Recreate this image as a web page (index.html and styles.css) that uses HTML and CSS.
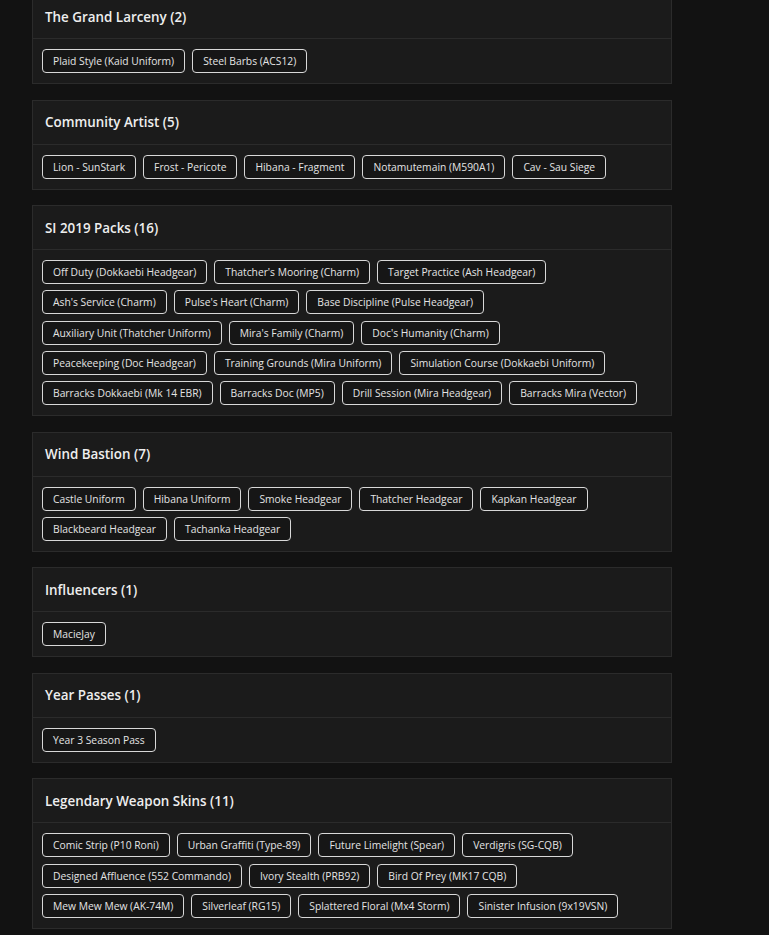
FILE: index.html
```html
<!DOCTYPE html>
<html lang="en">
<head>
<meta charset="utf-8">
<title>Packs</title>
<link rel="stylesheet" href="styles.css">
</head>
<body>
<div class="list">
  <section class="card">
    <h2 class="card-title">The Grand Larceny (2)</h2>
    <div class="tags">
      <span class="tag">Plaid Style (Kaid Uniform)</span>
      <span class="tag">Steel Barbs (ACS12)</span>
    </div>
  </section>
  <section class="card">
    <h2 class="card-title">Community Artist (5)</h2>
    <div class="tags">
      <span class="tag">Lion - SunStark</span>
      <span class="tag">Frost - Pericote</span>
      <span class="tag">Hibana - Fragment</span>
      <span class="tag">Notamutemain (M590A1)</span>
      <span class="tag">Cav - Sau Siege</span>
    </div>
  </section>
  <section class="card">
    <h2 class="card-title">SI 2019 Packs (16)</h2>
    <div class="tags">
      <span class="tag">Off Duty (Dokkaebi Headgear)</span>
      <span class="tag">Thatcher's Mooring (Charm)</span>
      <span class="tag">Target Practice (Ash Headgear)</span>
      <span class="tag">Ash's Service (Charm)</span>
      <span class="tag">Pulse's Heart (Charm)</span>
      <span class="tag">Base Discipline (Pulse Headgear)</span>
      <span class="tag">Auxiliary Unit (Thatcher Uniform)</span>
      <span class="tag">Mira's Family (Charm)</span>
      <span class="tag">Doc's Humanity (Charm)</span>
      <span class="tag">Peacekeeping (Doc Headgear)</span>
      <span class="tag">Training Grounds (Mira Uniform)</span>
      <span class="tag">Simulation Course (Dokkaebi Uniform)</span>
      <span class="tag">Barracks Dokkaebi (Mk 14 EBR)</span>
      <span class="tag">Barracks Doc (MP5)</span>
      <span class="tag">Drill Session (Mira Headgear)</span>
      <span class="tag">Barracks Mira (Vector)</span>
    </div>
  </section>
  <section class="card">
    <h2 class="card-title">Wind Bastion (7)</h2>
    <div class="tags">
      <span class="tag">Castle Uniform</span>
      <span class="tag">Hibana Uniform</span>
      <span class="tag">Smoke Headgear</span>
      <span class="tag">Thatcher Headgear</span>
      <span class="tag">Kapkan Headgear</span>
      <span class="tag">Blackbeard Headgear</span>
      <span class="tag">Tachanka Headgear</span>
    </div>
  </section>
  <section class="card">
    <h2 class="card-title">Influencers (1)</h2>
    <div class="tags">
      <span class="tag">MacieJay</span>
    </div>
  </section>
  <section class="card">
    <h2 class="card-title">Year Passes (1)</h2>
    <div class="tags">
      <span class="tag">Year 3 Season Pass</span>
    </div>
  </section>
  <section class="card">
    <h2 class="card-title">Legendary Weapon Skins (11)</h2>
    <div class="tags">
      <span class="tag">Comic Strip (P10 Roni)</span>
      <span class="tag">Urban Graffiti (Type-89)</span>
      <span class="tag">Future Limelight (Spear)</span>
      <span class="tag">Verdigris (SG-CQB)</span>
      <span class="tag">Designed Affluence (552 Commando)</span>
      <span class="tag">Ivory Stealth (PRB92)</span>
      <span class="tag">Bird Of Prey (MK17 CQB)</span>
      <span class="tag">Mew Mew Mew (AK-74M)</span>
      <span class="tag">Silverleaf (RG15)</span>
      <span class="tag">Splattered Floral (Mx4 Storm)</span>
      <span class="tag">Sinister Infusion (9x19VSN)</span>
    </div>
  </section>
</div>
</body>
</html>
```

FILE: styles.css
```css
html, body {
  margin: 0;
  padding: 0;
  background: #121212;
}
body {
  font-family: "Open Sans", "Liberation Sans", sans-serif;
  color: #e6e6e6;
  overflow: hidden;
}
.list {
  width: 640px;
  margin: -6px 0 0 32px;
  display: flex;
  flex-direction: column;
  gap: 15.5px;
}
.card {
  background: #1b1b1b;
  border: 1px solid #2b2b2b;
}
.card-title {
  margin: 0;
  height: 43px;
  display: flex;
  align-items: center;
  padding: 0 12px;
  font-size: 13.4px;
  font-weight: 600;
  color: #eeeeee;
  border-bottom: 1px solid #2b2b2b;
}
.tags {
  display: flex;
  flex-wrap: wrap;
  column-gap: 7px;
  row-gap: 6.25px;
  padding: 10px 9px 10px;
}
.tag {
  box-sizing: border-box;
  height: 24px;
  display: inline-flex;
  align-items: center;
  padding: 0 10px;
  border: 1px solid #d8d8d8;
  border-radius: 4px;
  background: #161616;
  font-size: 10.3px;
  color: #e4e4e4;
  white-space: nowrap;
}
```
